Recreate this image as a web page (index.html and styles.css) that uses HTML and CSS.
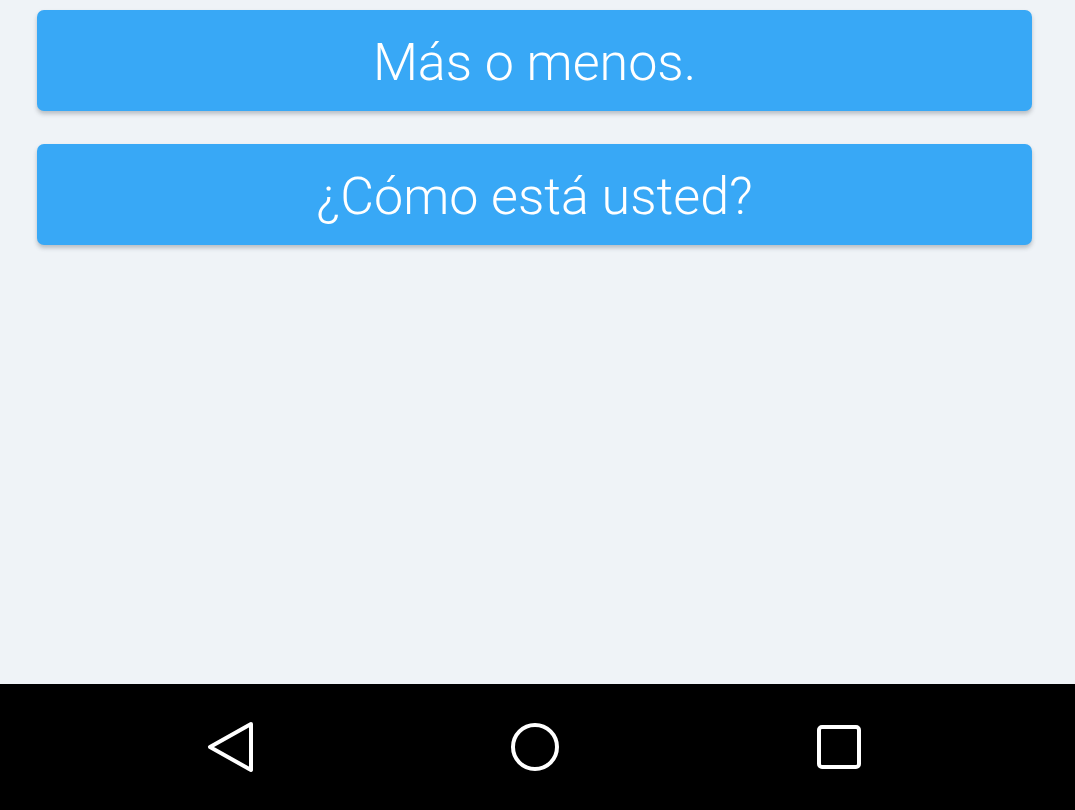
FILE: index.html
```html
<!DOCTYPE html>
<html lang="es">
<head>
<meta charset="utf-8">
<link rel="stylesheet" href="styles.css">
</head>
<body>
<main class="screen">
  <button class="answer">Más o menos.</button>
  <button class="answer">¿Cómo está usted?</button>
</main>
<nav class="navbar">
  <span class="nav-item">
    <svg width="48" height="52" viewBox="0 0 48 52"><path d="M44 3 L3 26 L44 49 Z" fill="none" stroke="#fff" stroke-width="4" stroke-linejoin="round"/></svg>
  </span>
  <span class="nav-item">
    <svg width="52" height="52" viewBox="0 0 52 52"><circle cx="26" cy="26" r="22" fill="none" stroke="#fff" stroke-width="4"/></svg>
  </span>
  <span class="nav-item">
    <svg width="48" height="48" viewBox="0 0 48 48"><rect x="4" y="4" width="40" height="40" rx="3" fill="none" stroke="#fff" stroke-width="4"/></svg>
  </span>
</nav>
</body>
</html>
```
FILE: styles.css
```css
html, body {
  margin: 0;
  padding: 0;
}
body {
  width: 1075px;
  height: 810px;
  background: #eff3f7;
  font-family: Roboto, "Noto Sans", sans-serif;
  overflow: hidden;
}
.screen {
  height: 684px;
  box-sizing: border-box;
  padding: 10px 43px 0 37px;
  display: flex;
  flex-direction: column;
  gap: 33px;
}
.answer {
  height: 101px;
  border: none;
  border-radius: 7px;
  background: #38a8f6;
  color: #fff;
  font-family: Roboto, "Noto Sans", sans-serif;
  font-weight: 300;
  font-size: 52px;
  padding: 4px 0 0;
  box-shadow: 0 3px 4px rgba(60, 70, 80, 0.3);
}
.navbar {
  height: 126px;
  background: #000;
  display: flex;
  align-items: center;
  justify-content: center;
  padding-right: 5px;
}
.nav-item {
  width: 304px;
  display: flex;
  justify-content: center;
  align-items: center;
}
.nav-item svg { display: block; }
```
